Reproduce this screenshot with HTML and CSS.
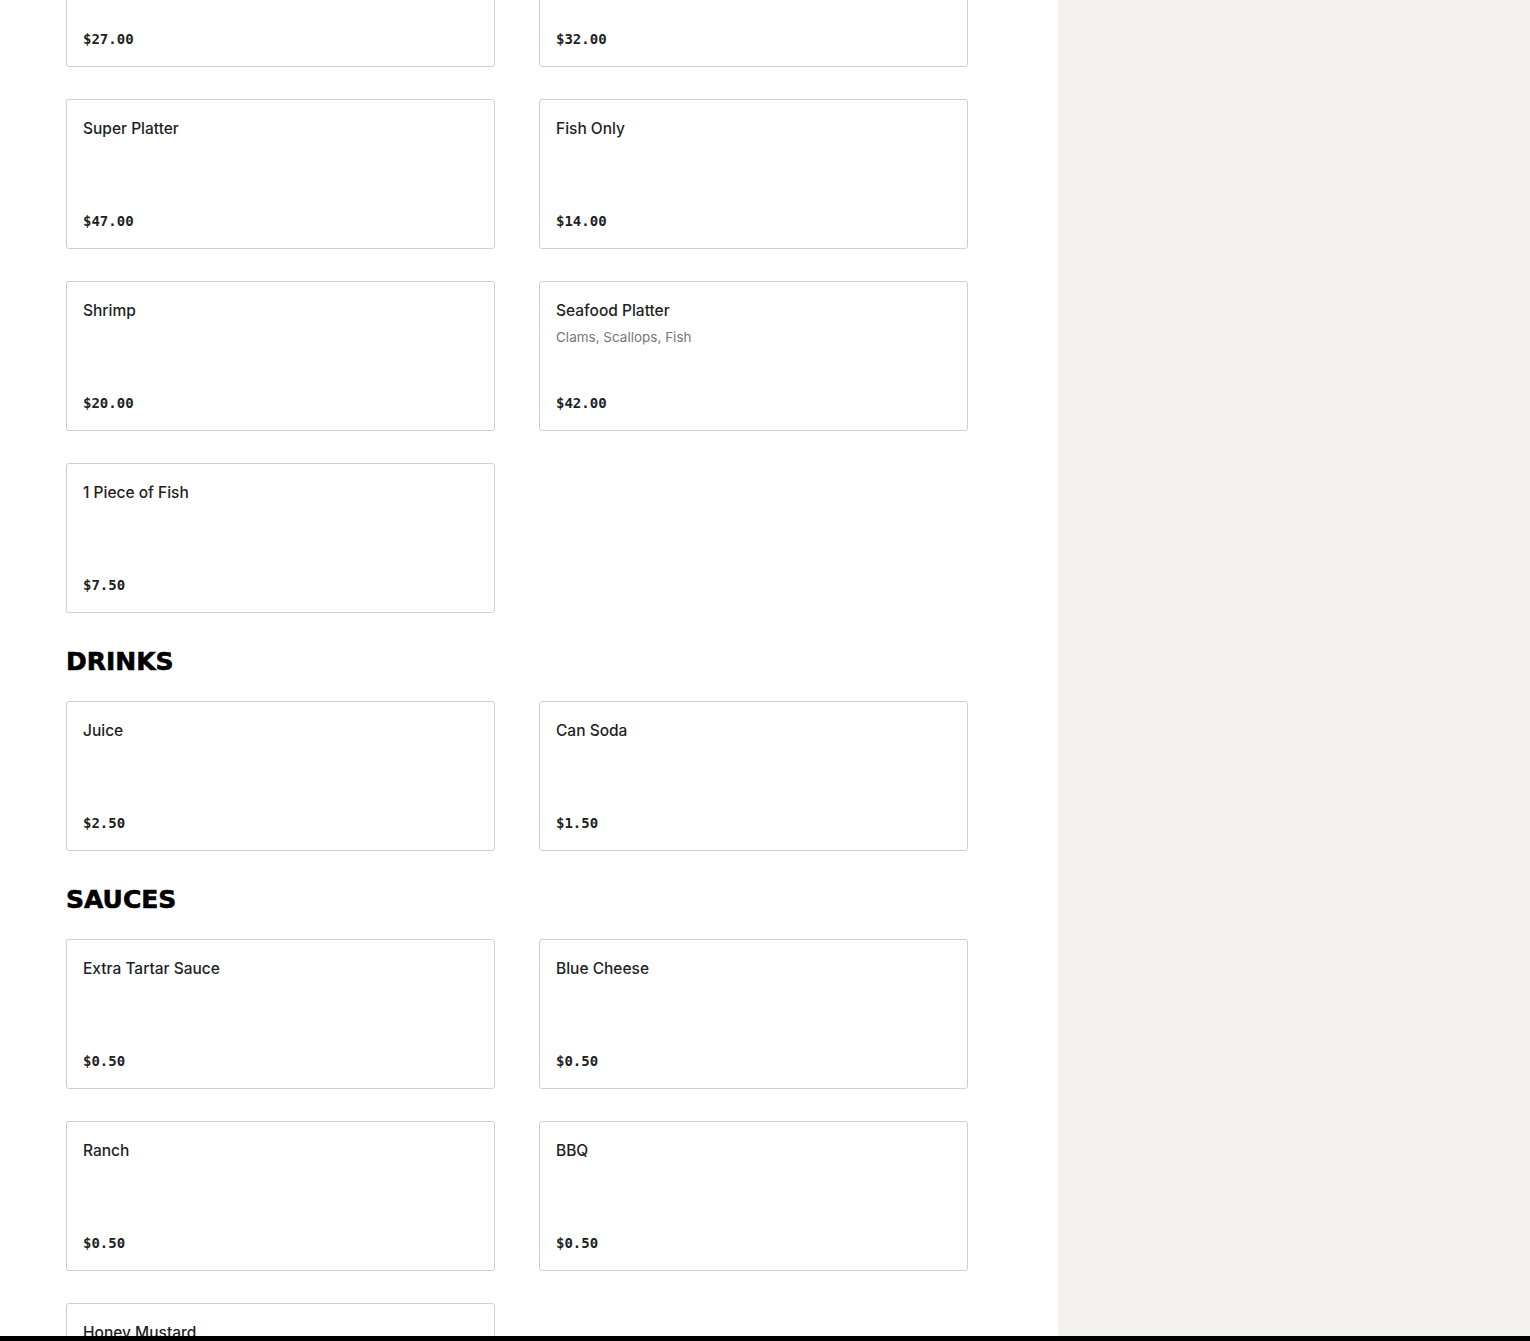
FILE: index.html
```html
<!DOCTYPE html>
<html>
<head>
<meta charset="utf-8">
<link rel="stylesheet" href="styles.css">
</head>
<body>
<div class="page">
  <main class="menu">
    <section class="section first">
      <div class="grid">
        <div class="card"><div class="info"><div class="name">Two Piece Dinner</div></div><div class="price">$27.00</div></div>
        <div class="card"><div class="info"><div class="name">Combo Platter</div></div><div class="price">$32.00</div></div>
        <div class="card"><div class="info"><div class="name">Super Platter</div></div><div class="price">$47.00</div></div>
        <div class="card"><div class="info"><div class="name">Fish Only</div></div><div class="price">$14.00</div></div>
        <div class="card"><div class="info"><div class="name">Shrimp</div></div><div class="price">$20.00</div></div>
        <div class="card"><div class="info"><div class="name">Seafood Platter</div><div class="desc">Clams, Scallops, Fish</div></div><div class="price">$42.00</div></div>
        <div class="card"><div class="info"><div class="name">1 Piece of Fish</div></div><div class="price">$7.50</div></div>
      </div>
    </section>
    <section class="section">
      <h2 class="heading">DRINKS</h2>
      <div class="grid">
        <div class="card"><div class="info"><div class="name">Juice</div></div><div class="price">$2.50</div></div>
        <div class="card"><div class="info"><div class="name">Can Soda</div></div><div class="price">$1.50</div></div>
      </div>
    </section>
    <section class="section">
      <h2 class="heading">SAUCES</h2>
      <div class="grid">
        <div class="card"><div class="info"><div class="name">Extra Tartar Sauce</div></div><div class="price">$0.50</div></div>
        <div class="card"><div class="info"><div class="name">Blue Cheese</div></div><div class="price">$0.50</div></div>
        <div class="card"><div class="info"><div class="name">Ranch</div></div><div class="price">$0.50</div></div>
        <div class="card"><div class="info"><div class="name">BBQ</div></div><div class="price">$0.50</div></div>
        <div class="card"><div class="info"><div class="name">Honey Mustard</div></div><div class="price">$0.50</div></div>
      </div>
    </section>
  </main>
  <aside class="side"></aside>
</div>
<div class="bottom-bar"></div>
</body>
</html>
```
FILE: styles.css
```css
html, body {
  margin: 0;
  padding: 0;
  height: 100%;
  overflow: hidden;
  background: #ffffff;
}
body {
  font-family: Inter, "Liberation Sans", sans-serif;
  color: #222222;
}
.page {
  display: grid;
  grid-template-columns: 1058px 1fr;
  height: 100vh;
}
.menu {
  padding-left: 66px;
  margin-top: -83px;
}
.side {
  background: #f3f2ef;
}
.grid {
  display: grid;
  grid-template-columns: 429px 429px;
  column-gap: 44px;
  row-gap: 32px;
}
.card {
  box-sizing: border-box;
  height: 150px;
  border: 1px solid #cfcfcf;
  border-radius: 3px;
  padding: 17px 16px 17px 16px;
  display: flex;
  flex-direction: column;
  justify-content: space-between;
}
.name {
  font-size: 15.5px;
  line-height: 24px;
  font-weight: 500;
  color: #1f1f1f;
}
.desc {
  margin-top: 4px;
  font-size: 13.5px;
  line-height: 20px;
  color: #767676;
}
.price {
  font-family: "DejaVu Sans Mono", "Liberation Mono", monospace;
  font-size: 14px;
  line-height: 20px;
  font-weight: bold;
  color: #222222;
}
.heading {
  margin: 34px 0 24px 0;
  font-family: "DejaVu Sans", sans-serif;
  font-weight: 900;
  font-size: 25px;
  line-height: 30px;
  color: #000000;
  -webkit-text-stroke: 0.6px #000000;
}
.bottom-bar {
  position: fixed;
  left: 0;
  right: 0;
  bottom: 0;
  height: 5px;
  background: #000000;
}
```
